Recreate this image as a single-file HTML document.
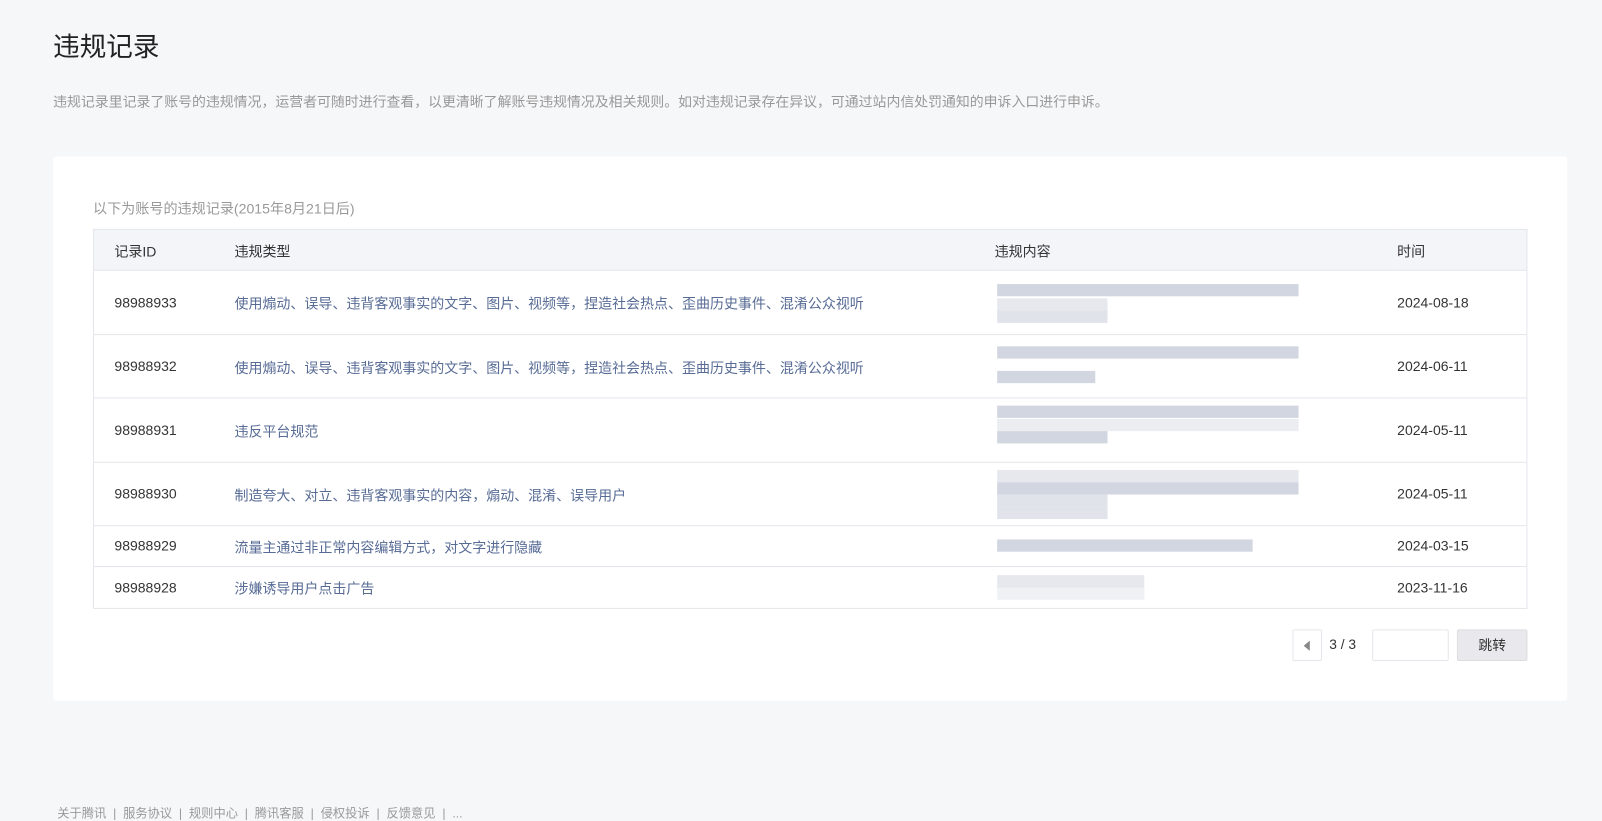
<!DOCTYPE html>
<html><head><meta charset="utf-8"><style>
*{margin:0;padding:0;box-sizing:border-box}
body{width:1602px;height:812px;overflow:hidden;background:#f6f7f9;font-family:"Liberation Sans","Noto Sans CJK SC",sans-serif;position:relative;color:#333}
#w{position:absolute;left:0;top:0;width:1568px;height:800px;transform:scale(1.0217);transform-origin:0 0}
h1{position:absolute;left:52px;top:26px;font-size:26px;font-weight:normal;color:#222}
.desc{position:absolute;left:52px;top:88px;font-size:13.6px;color:#999}
.card{position:absolute;left:52px;top:153px;width:1482px;height:533px;background:#fff;border-radius:3px}
.sub{position:absolute;left:91px;top:193px;font-size:13.8px;color:#999}
table{position:absolute;left:91px;top:224px;width:1404px;table-layout:fixed;border-collapse:collapse;border:1px solid #e4e6eb;font-size:13.7px}
th{background:#f4f5f9;height:40px;text-align:left;font-weight:normal;color:#333;border-bottom:1px solid #e4e6eb}
td{border-bottom:1px solid #e4e6eb;color:#333}
td.t{color:#576b95}
th:first-child,td:first-child{padding-left:20px}
.b{position:absolute;height:12px;background:#cdd1dd;opacity:.9}
.pg{position:absolute;top:616px;font-size:13.5px}
.foot{position:absolute;left:56px;top:787px;font-size:12px;color:#999}
</style></head><body><div id="w">
<h1>违规记录</h1>
<div class="desc">违规记录里记录了账号的违规情况，运营者可随时进行查看，以更清晰了解账号违规情况及相关规则。如对违规记录存在异议，可通过站内信处罚通知的申诉入口进行申诉。</div>
<div class="card"></div>
<div class="sub">以下为账号的违规记录(2015年8月21日后)</div>
<table>
<colgroup><col style="width:138px"><col style="width:744px"><col style="width:394px"><col></colgroup>
<tr><th>记录ID</th><th>违规类型</th><th>违规内容</th><th>时间</th></tr>
<tr style="height:63px"><td>98988933</td><td class="t">使用煽动、误导、违背客观事实的文字、图片、视频等，捏造社会热点、歪曲历史事件、混淆公众视听</td><td><div style="position:relative;height:40px"><div class="b" style="left:2px;top:2px;width:295px"></div><div class="b" style="left:2px;top:16px;width:108px;opacity:.5"></div><div class="b" style="left:2px;top:28px;width:108px;opacity:.6"></div></div></td><td>2024-08-18</td></tr>
<tr style="height:62px"><td>98988932</td><td class="t">使用煽动、误导、违背客观事实的文字、图片、视频等，捏造社会热点、歪曲历史事件、混淆公众视听</td><td><div style="position:relative;height:40px"><div class="b" style="left:2px;top:0;width:295px"></div><div class="b" style="left:2px;top:24px;width:96px"></div></div></td><td>2024-06-11</td></tr>
<tr style="height:63px"><td>98988931</td><td class="t">违反平台规范</td><td><div style="position:relative;height:48px"><div class="b" style="left:2px;top:0;width:295px"></div><div class="b" style="left:2px;top:13px;width:295px;opacity:.4"></div><div class="b" style="left:2px;top:25px;width:108px"></div></div></td><td>2024-05-11</td></tr>
<tr style="height:62px"><td>98988930</td><td class="t">制造夸大、对立、违背客观事实的内容，煽动、混淆、误导用户</td><td><div style="position:relative;height:48px"><div class="b" style="left:2px;top:0;width:295px;opacity:.5"></div><div class="b" style="left:2px;top:12px;width:295px"></div><div class="b" style="left:2px;top:24px;width:108px;opacity:.6"></div><div class="b" style="left:2px;top:36px;width:108px;opacity:.6"></div></div></td><td>2024-05-11</td></tr>
<tr style="height:40px"><td>98988929</td><td class="t">流量主通过非正常内容编辑方式，对文字进行隐藏</td><td><div style="position:relative;height:14px"><div class="b" style="left:2px;top:0;width:250px"></div></div></td><td>2024-03-15</td></tr>
<tr style="height:41px"><td>98988928</td><td class="t">涉嫌诱导用户点击广告</td><td><div style="position:relative;height:24px"><div class="b" style="left:2px;top:0;width:144px;opacity:.5"></div><div class="b" style="left:2px;top:12px;width:144px;opacity:.3"></div></div></td><td>2023-11-16</td></tr>
</table>
<div class="pg" style="left:1265px;width:29px;height:31px;border:1px solid #e4e6eb;border-radius:2px"><div style="position:absolute;left:10px;top:10px;border-right:6px solid #888;border-top:5px solid transparent;border-bottom:5px solid transparent"></div></div>
<div class="pg" style="left:1301px;top:623px">3 / 3</div>
<div class="pg" style="left:1343px;width:75px;height:31px;border:1px solid #e4e6eb;border-radius:2px"></div>
<div class="pg" style="left:1426px;width:69px;height:31px;border:1px solid #ddd;background:#e9e9ed;border-radius:2px;text-align:center;line-height:29px">跳转</div>
<div class="foot">关于腾讯 &nbsp;|&nbsp; 服务协议 &nbsp;|&nbsp; 规则中心 &nbsp;|&nbsp; 腾讯客服 &nbsp;|&nbsp; 侵权投诉 &nbsp;|&nbsp; 反馈意见 &nbsp;|&nbsp; ...</div>
</div></body></html>
